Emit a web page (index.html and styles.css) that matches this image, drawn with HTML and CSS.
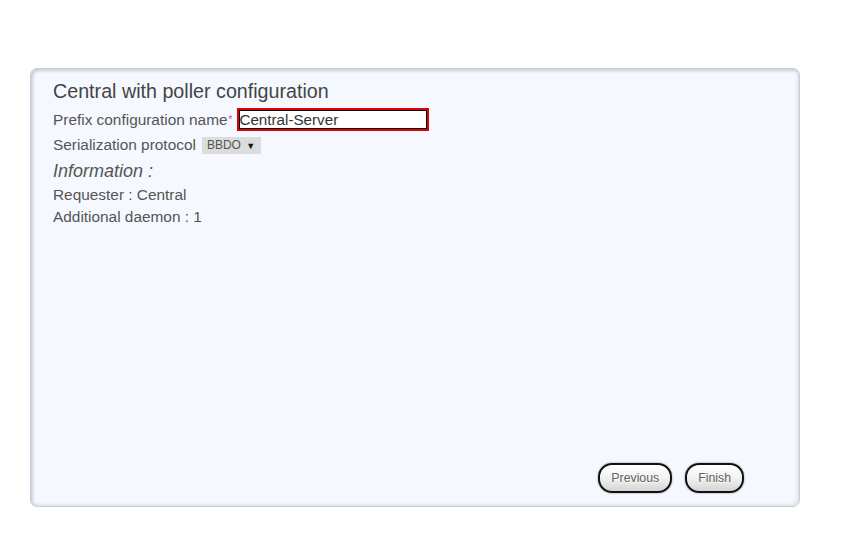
FILE: index.html
```html
<!DOCTYPE html>
<html>
<head>
<meta charset="utf-8">
<link rel="stylesheet" href="styles.css">
</head>
<body>
<div class="page">
  <div class="panel">
    <div class="content">
      <h2 class="title">Central with poller configuration</h2>
      <div class="row">
        <span class="label">Prefix configuration name<span class="req">*</span></span>
        <span class="input">Central-Server</span>
      </div>
      <div class="row">
        <span class="label">Serialization protocol</span>
        <span class="select">BBDO <span class="arrow">▼</span></span>
      </div>
      <div class="info">Information :</div>
      <div class="line">Requester : Central</div>
      <div class="line">Additional daemon : 1</div>
    </div>
    <div class="actions">
      <button class="btn">Previous</button>
      <button class="btn">Finish</button>
    </div>
  </div>
</div>
</body>
</html>
```
FILE: styles.css
```css
html, body {
  margin: 0;
  padding: 0;
  background: #fff;
}
body {
  font-family: "Liberation Sans", Arial, sans-serif;
  color: #555;
}
.page {
  padding: 68px 0 0 30px;
}
.panel {
  box-sizing: border-box;
  width: 770px;
  height: 439px;
  background: #f5f8fe;
  border-radius: 7px;
  border: 1px solid #c8ccd4;
  box-shadow: inset 2px 2px 3px rgba(120,130,150,0.35), inset -2px -2px 3px rgba(160,170,185,0.25);
  display: flex;
  flex-direction: column;
  justify-content: space-between;
  padding: 10px 55px 13px 22px;
}
.title {
  margin: 0 0 4px 0;
  font-weight: normal;
  font-size: 19.7px;
  line-height: 24px;
  color: #444;
}
.row {
  display: flex;
  align-items: center;
  font-size: 15.4px;
  height: 25px;
}
.label { color: #555; }
.req { color: #e040a0; font-size: 10px; margin-left: 1px; position: relative; top: -2px; }
.input {
  box-sizing: border-box;
  margin-left: 5px;
  width: 192px;
  height: 23px;
  border: 2px solid #e00000;
  outline: 1px solid #000;
  outline-offset: -3px;
  background: #fff;
  color: #333;
  font-size: 15.2px;
  line-height: 19px;
  padding-left: 0;
}
.select {
  margin-left: 6px;
  margin-top: 2px;
  background: #dcdcdc;
  color: #555;
  font-size: 12px;
  line-height: 16px;
  padding: 0 5px;
  width: 49px;
}
.arrow { font-size: 9px; color: #111; margin-left: 2px; }
.info {
  font-style: italic;
  font-size: 18px;
  line-height: 24px;
  color: #555;
  margin-top: 2px;
}
.line {
  font-size: 15.4px;
  line-height: 22px;
}
.info + .line { margin-top: 1px; }
.actions {
  display: flex;
  justify-content: flex-end;
  gap: 13px;
}
.btn {
  height: 30px;
  padding: 0 11px;
  border: 2px solid #111;
  border-radius: 14px;
  background: linear-gradient(#ffffff 0%, #f2f2f2 50%, #d4d4d4 100%);
  box-shadow: 0 0 2px rgba(0,0,0,0.5);
  font-family: "Liberation Sans", Arial, sans-serif;
  font-size: 12.3px;
  color: #606060;
  text-shadow: 0 1px 0 #fff;
}
```
